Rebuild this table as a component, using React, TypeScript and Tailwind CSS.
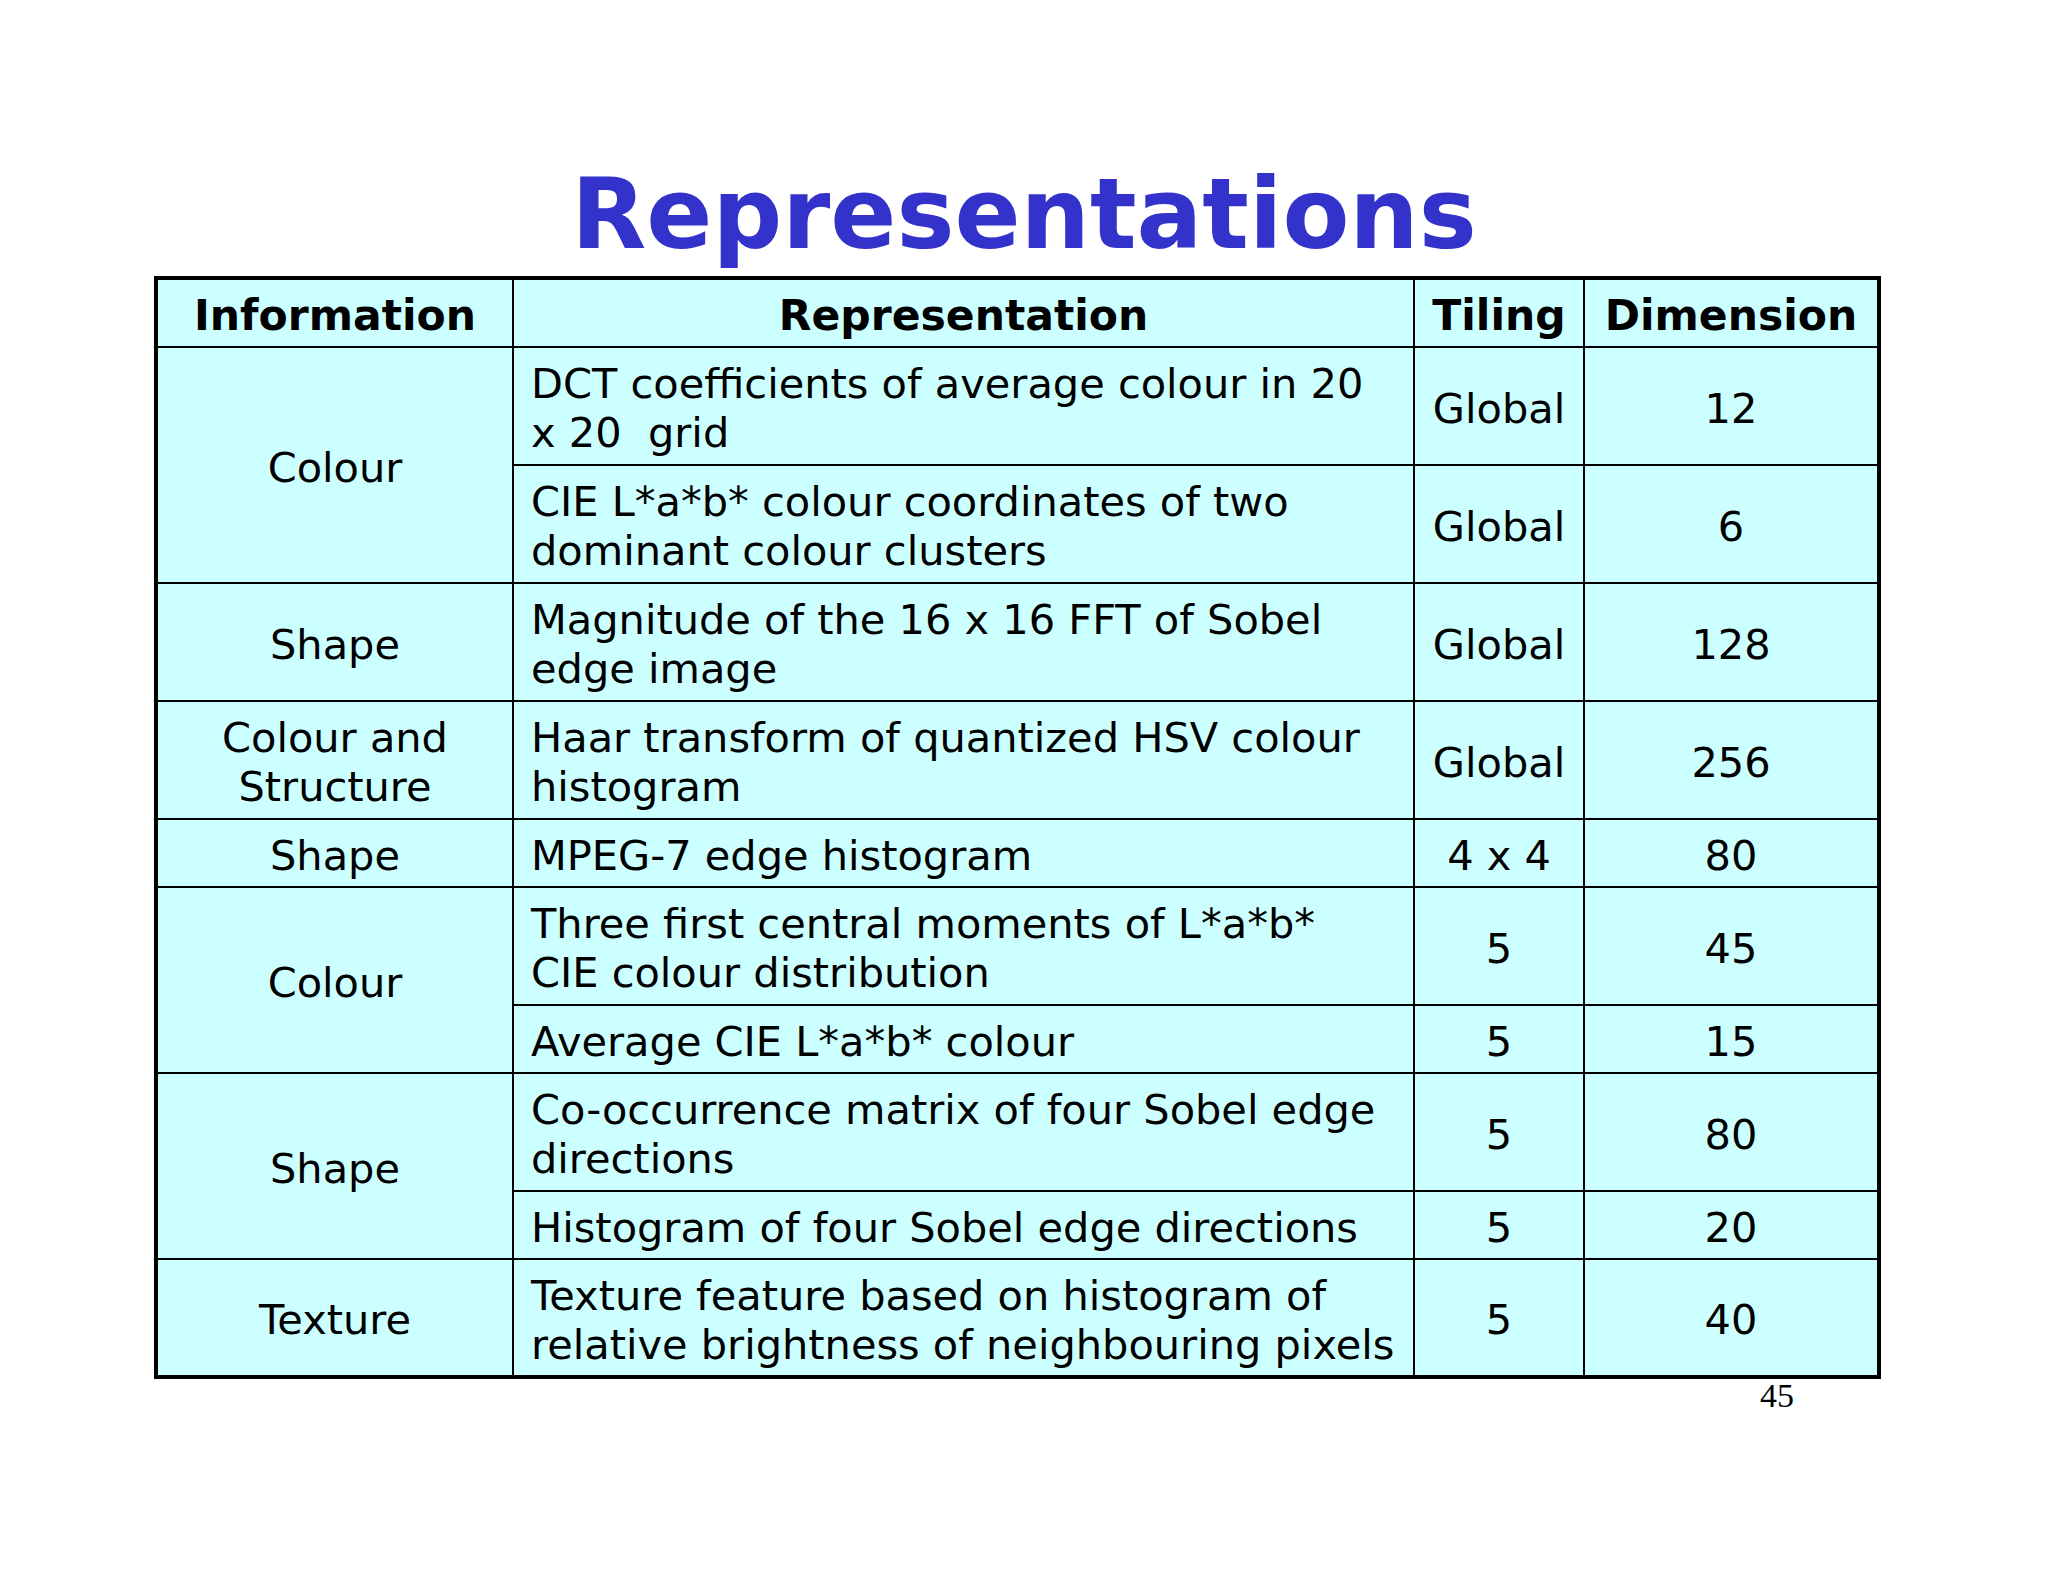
import React from 'react';

type Row = {
  info?: string[];
  span?: number;
  rep: string[];
  tiling: string;
  dim: string;
};

const rows: Row[] = [
  { info: ['Colour'], span: 2, rep: ['DCT coefficients of average colour in 20', 'x 20  grid'], tiling: 'Global', dim: '12' },
  { rep: ['CIE L*a*b* colour coordinates of two', 'dominant colour clusters'], tiling: 'Global', dim: '6' },
  { info: ['Shape'], rep: ['Magnitude of the 16 x 16 FFT of Sobel', 'edge image'], tiling: 'Global', dim: '128' },
  { info: ['Colour and', 'Structure'], rep: ['Haar transform of quantized HSV colour', 'histogram'], tiling: 'Global', dim: '256' },
  { info: ['Shape'], rep: ['MPEG-7 edge histogram'], tiling: '4 x 4', dim: '80' },
  { info: ['Colour'], span: 2, rep: ['Three first central moments of L*a*b*', 'CIE colour distribution'], tiling: '5', dim: '45' },
  { rep: ['Average CIE L*a*b* colour'], tiling: '5', dim: '15' },
  { info: ['Shape'], span: 2, rep: ['Co-occurrence matrix of four Sobel edge', 'directions'], tiling: '5', dim: '80' },
  { rep: ['Histogram of four Sobel edge directions'], tiling: '5', dim: '20' },
  { info: ['Texture'], rep: ['Texture feature based on histogram of', 'relative brightness of neighbouring pixels'], tiling: '5', dim: '40' },
];

const Lines: React.FC<{ lines: string[] }> = ({ lines }) => (
  <>
    {lines.map((l, i) => (
      <div key={i} className="whitespace-pre">{l}</div>
    ))}
  </>
);

const cell = 'border-2 border-black bg-[#ccffff] align-middle px-0 pt-[5px] pb-0';

const App: React.FC = () => {
  return (
    <div className="min-h-[1582px] w-[2048px] bg-white font-['DejaVu_Sans',sans-serif] text-black">
      {/* Title */}
      <h1 className="pt-[166px] text-center text-[97.5px] font-bold leading-none text-[#3333cc]">
        Representations
      </h1>

      {/* Table */}
      <table className="mt-[12px] ml-[154px] w-[1723px] table-fixed border-collapse border-4 border-black text-[41.5px] leading-[49px]">
        <colgroup>
          <col className="w-[357px]" />
          <col className="w-[901px]" />
          <col className="w-[170px]" />
          <col className="w-[295px]" />
        </colgroup>
        <thead>
          <tr className="h-[69px]">
            <th className={`${cell} text-center text-[42.5px] font-bold`}>Information</th>
            <th className={`${cell} text-center text-[42.5px] font-bold`}>Representation</th>
            <th className={`${cell} text-center text-[42.5px] font-bold`}>Tiling</th>
            <th className={`${cell} text-center text-[42.5px] font-bold`}>Dimension</th>
          </tr>
        </thead>
        <tbody>
          {rows.map((r, i) => (
            <tr key={i} className={r.rep.length > 1 ? 'h-[118px]' : 'h-[68px]'}>
              {r.info && (
                <td rowSpan={r.span ?? 1} className={`${cell} text-center`}>
                  <Lines lines={r.info} />
                </td>
              )}
              <td className={`${cell} pl-[17px] text-left`}>
                <Lines lines={r.rep} />
              </td>
              <td className={`${cell} text-center`}>{r.tiling}</td>
              <td className={`${cell} text-center`}>{r.dim}</td>
            </tr>
          ))}
        </tbody>
      </table>

      {/* Page number */}
      <div className="mt-0 ml-[154px] w-[1723px] pr-[83px] text-right font-['Liberation_Serif',serif] text-[34px] leading-none">
        45
      </div>
    </div>
  );
};

export default App;
